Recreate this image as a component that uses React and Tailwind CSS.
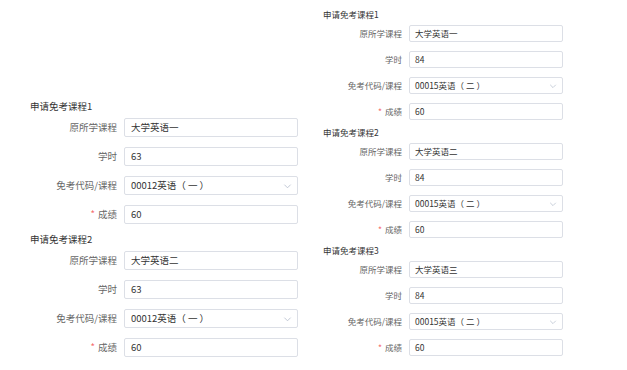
import React from "react";

const left = [
  { title: "申请免考课程1", course: "大学英语一", hours: "63", code: "00012英语（ 一 ）", score: "60" },
  { title: "申请免考课程2", course: "大学英语二", hours: "63", code: "00012英语（ 一 ）", score: "60" },
];

const right = [
  { title: "申请免考课程1", course: "大学英语一", hours: "84", code: "00015英语（ 二 ）", score: "60" },
  { title: "申请免考课程2", course: "大学英语二", hours: "84", code: "00015英语（ 二 ）", score: "60" },
  { title: "申请免考课程3", course: "大学英语三", hours: "84", code: "00015英语（ 二 ）", score: "60" },
];

// two sizes: the right column in the picture is drawn a bit smaller
const sizes = {
  lg: {
    section: "mb-[9px]",
    title: "h-[12px] leading-[12px] text-[9.5px] mb-[6px]",
    rows: "flex flex-col gap-[10px]",
    label: "w-[87px] text-[9.5px] mr-[7px]",
    input: "w-[174px] h-[19px] text-[9.5px] px-[6px]",
    chevron: "w-[9px] h-[9px] right-[5px]",
  },
  sm: {
    section: "mb-[7px]",
    title: "h-[11px] leading-[11px] text-[8.5px] mb-[5px]",
    rows: "flex flex-col gap-[9px]",
    label: "w-[79px] text-[8.5px] mr-[7px]",
    input: "w-[154px] h-[17px] text-[8.5px] px-[5px]",
    chevron: "w-[8px] h-[8px] right-[5px]",
  },
};

function Chevron({ className }) {
  return (
    <svg viewBox="0 0 10 10" className={`absolute top-1/2 -translate-y-1/2 ${className}`} fill="none">
      <path d="M1.5 3.5 L5 7 L8.5 3.5" stroke="#b4bccc" strokeWidth="0.9" />
    </svg>
  );
}

function Row({ s, label, value, required, select }) {
  return (
    <div className="flex items-center">
      <div className={`${s.label} text-right text-[#666] shrink-0`}>
        {required && <span className="text-[#f56c6c] mr-[3px]">*</span>}
        {label}
      </div>
      <div
        className={`${s.input} relative flex items-center border border-[#dcdfe6] rounded-[2px] bg-white text-[#333] whitespace-pre`}
      >
        {value}
        {select && <Chevron className={s.chevron} />}
      </div>
    </div>
  );
}

function Section({ item, size }) {
  const s = sizes[size];
  return (
    <div className={s.section}>
      <div className={`${s.title} text-[#333]`}>{item.title}</div>
      <div className={s.rows}>
        <Row s={s} label="原所学课程" value={item.course} />
        <Row s={s} label="学时" value={item.hours} />
        <Row s={s} label="免考代码/课程" value={item.code} select />
        <Row s={s} label="成绩" value={item.score} required />
      </div>
    </div>
  );
}

export default function App() {
  return (
    <div
      className="w-[627px] h-[370px] bg-white flex items-start overflow-hidden"
      style={{ fontFamily: '"Noto Sans CJK SC", "Noto Sans", sans-serif' }}
    >
      <div className="ml-[30px] pt-[100px]">
        {left.map((item) => (
          <Section key={item.title} item={item} size="lg" />
        ))}
      </div>
      <div className="ml-[25px] pt-[9px]">
        {right.map((item) => (
          <Section key={item.title} item={item} size="sm" />
        ))}
      </div>
    </div>
  );
}
